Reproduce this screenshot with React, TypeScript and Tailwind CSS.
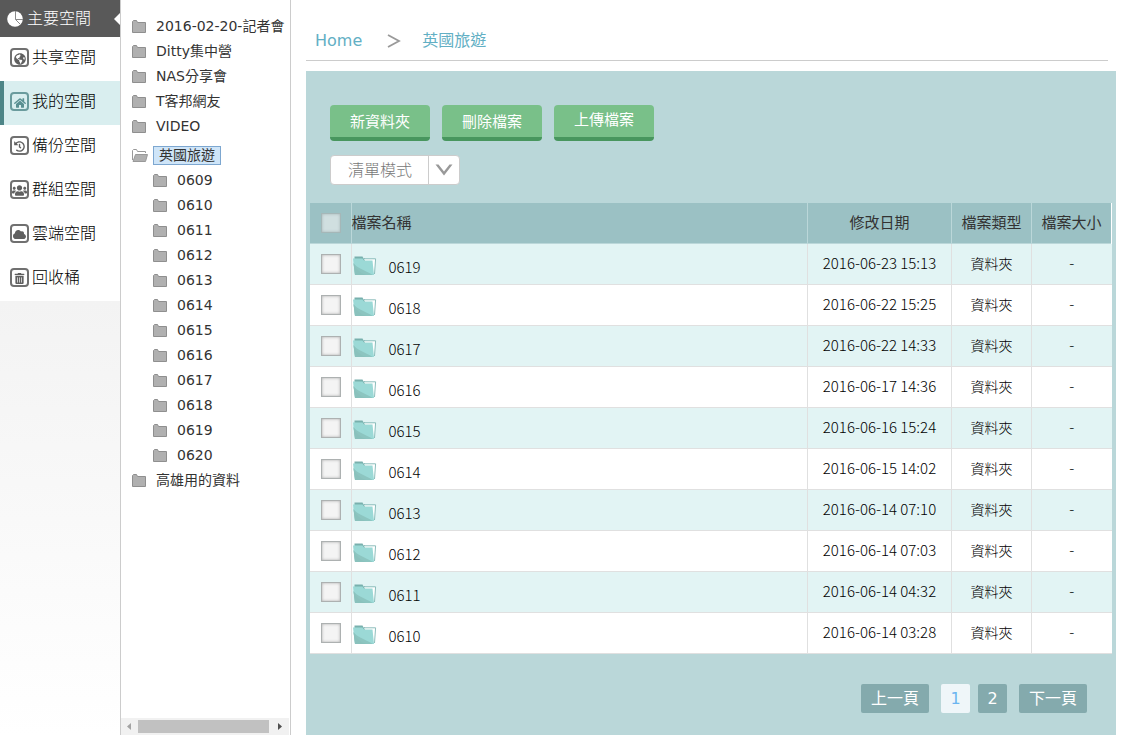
import React from "react";
import { FaHome, FaHistory, FaUsers, FaCloud, FaTrashAlt, FaGlobeAmericas } from "react-icons/fa";
import type { IconType } from "react-icons";

const spaces: { label: string; icon: IconType; size: string; active?: boolean }[] = [
  { label: "共享空間", icon: FaGlobeAmericas, size: "size-3" },
  { label: "我的空間", icon: FaHome, size: "size-3", active: true },
  { label: "備份空間", icon: FaHistory, size: "size-[11px]" },
  { label: "群組空間", icon: FaUsers, size: "size-[15px]" },
  { label: "雲端空間", icon: FaCloud, size: "size-[13px]" },
  { label: "回收桶", icon: FaTrashAlt, size: "size-[11px]" },
];

const topFolders = ["2016-02-20-記者會", "Ditty集中營", "NAS分享會", "T客邦網友", "VIDEO"];
const subFolders = ["0609", "0610", "0611", "0612", "0613", "0614", "0615", "0616", "0617", "0618", "0619", "0620"];

const files = [
  { name: "0619", date: "2016-06-23 15:13" },
  { name: "0618", date: "2016-06-22 15:25" },
  { name: "0617", date: "2016-06-22 14:33" },
  { name: "0616", date: "2016-06-17 14:36" },
  { name: "0615", date: "2016-06-16 15:24" },
  { name: "0614", date: "2016-06-15 14:02" },
  { name: "0613", date: "2016-06-14 07:10" },
  { name: "0612", date: "2016-06-14 07:03" },
  { name: "0611", date: "2016-06-14 04:32" },
  { name: "0610", date: "2016-06-14 03:28" },
];

const checkbox =
  "mx-auto block size-5 appearance-none border border-[#adb1b1] bg-[#f4f4f4] shadow-[inset_0_0_3px_rgba(0,0,0,0.3)] checked:bg-[#7fa9ac]";

function PieIcon() {
  return (
    <svg viewBox="0 0 16 16" className="size-4" aria-hidden="true">
      <circle cx="8" cy="8" r="7.800" fill="#fff" />
      <path d="M8.500 0V8.500H16M8.500 8.500L13.500 13.500" fill="none" stroke="#8a8a8a" />
    </svg>
  );
}

function TreeIcon() {
  return (
    <svg viewBox="0 0 14 13" className="h-[13px] w-[14px] shrink-0" aria-hidden="true">
      <path d="M.5 12.5V1.5L1.5.5H4.5L5.5 2.5H13.5V12.5Z" fill="#b0b0b0" stroke="#8f8f8f" />
    </svg>
  );
}

function OpenTreeIcon() {
  return (
    <svg viewBox="0 0 16 13" className="h-[13px] w-4 shrink-0" aria-hidden="true">
      <path d="M.5 11V1.5L1.5.5H4.5L5.5 2.5H13.5V4" fill="none" stroke="#999" />
      <path d="M3.5 5.5H15.5L13.5 12.5H1Z" fill="#b0b0b0" stroke="#999" />
    </svg>
  );
}

function FolderIcon() {
  return (
    <svg viewBox="0 0 24 20" className="h-5 w-6 shrink-0" aria-hidden="true">
      <path d="M1.500 .5H9.500L10.500 2.500H12V5H1.500Z" fill="#78b0ad" />
      <path d="M11 3H22.500L21.500 17H18Z" fill="#fff" />
      <path d="M11 2.800H22.600L21.500 18" fill="none" stroke="#80b5b3" strokeWidth=".9" />
      <path d="M0 2.500H9.500L11 4.500H19.500L21 19H2Z" fill="#9bd9d6" />
      <path d="M.5 7C4 12 10 13.500 20 19H2Z" fill="#8cc5c0" />
      <path d="M.5 7L2 19H13C7 17 3 13 .5 7Z" fill="#8ac1bc" />
    </svg>
  );
}

function TreeItem({ label, nested }: { label: string; nested?: boolean }) {
  return (
    <li>
      <a
        href="#"
        className={`flex h-[25px] items-center gap-[10px] whitespace-nowrap ${nested ? "pl-8" : "pl-[11px]"}`}
      >
        <TreeIcon />
        <span className="pb-0.5">{label}</span>
      </a>
    </li>
  );
}

export default function App() {
  return (
    <div className="flex h-screen bg-white pb-[6px] font-['Noto_Sans_CJK_TC',sans-serif] font-light text-black">
      <nav className="flex w-[121px] shrink-0 flex-col border-r border-[#ccc]" aria-label="空間">
        <a href="#" className="relative flex h-[37px] items-center gap-1 bg-[#595959] pl-[7px] text-base text-white">
          <PieIcon />
          <span className="pb-[3px]">主要空間</span>
          <svg viewBox="0 0 6 12" className="absolute top-[13px] right-0 h-3 w-[6px]" aria-hidden="true">
            <path d="M6 0V12L0 6Z" fill="#fff" />
          </svg>
        </a>
        {spaces.map(({ label, icon: Icon, size, active }) => (
          <a
            key={label}
            href="#"
            className={`flex h-11 items-center gap-[3px] border-l-4 pb-[3px] pl-[6px] text-base ${
              active ? "border-[#4d8587] bg-[#d9eeef]" : "border-white bg-white"
            }`}
          >
            <span
              className={`flex size-[19px] items-center justify-center rounded-[4px] border-2 pt-0.5 ${
                active ? "border-[#6a9b9d] text-[#5a9092]" : "border-[#707070] text-[#606060]"
              }`}
            >
              <Icon className={`${size} shrink-0`} />
            </span>
            <span className="pb-[3px]">{label}</span>
          </a>
        ))}
        <div className="flex-1 bg-linear-to-b from-[#f3f3f3] to-white" />
      </nav>

      <aside className="flex w-[170px] shrink-0 flex-col border-r border-[#ccc] font-['DejaVu_Sans','Noto_Sans_CJK_TC',sans-serif] text-sm font-normal text-[#333]">
        <ul className="flex-1 overflow-hidden pt-[14px]">
          {topFolders.map((f) => (
            <TreeItem key={f} label={f} />
          ))}
          <li>
            <a href="#" className="flex h-[29px] items-center gap-[5px] pt-1 pl-[11px]">
              <OpenTreeIcon />
              <span className="border border-[#7da7d0] bg-[#cfe5f8] px-[5px] leading-[17px]">英國旅遊</span>
            </a>
            <ul>
              {subFolders.map((f) => (
                <TreeItem key={f} label={f} nested />
              ))}
            </ul>
          </li>
          <TreeItem label="高雄用的資料" />
        </ul>
        <div className="mr-px flex h-[17px] items-center bg-[#f1f1f1]" aria-hidden="true">
          <svg viewBox="0 0 17 17" className="size-[17px] shrink-0">
            <path d="M10 5V12L6 8.5Z" fill="#a3a3a3" />
          </svg>
          <div className="h-[13px] flex-1 bg-[#c1c1c1]" />
          <svg viewBox="0 0 20 17" className="h-[17px] w-5 shrink-0">
            <path d="M9 5V12L13 8.5Z" fill="#505050" />
          </svg>
        </div>
      </aside>

      <main className="ml-[15px] flex min-w-0 flex-1 flex-col">
        <header className="mr-[34px] flex h-[61px] items-center border-b border-[#ccc] pt-[21px] pl-[9px] font-['DejaVu_Sans','Noto_Sans_CJK_TC',sans-serif] text-base font-normal text-[#62afc4]">
          <a href="#">Home</a>
          <svg viewBox="0 0 14 14" className="mr-[21px] ml-[25px] size-[14px]" aria-hidden="true">
            <path d="M1 1L12 7L1 13" fill="none" stroke="#999" strokeWidth="1.8" />
          </svg>
          <a href="#">英國旅遊</a>
        </header>

        <section className="mt-[10px] mr-[26px] flex-1 bg-[#bad7d9] px-1 pt-[34px]">
          <div className="flex gap-3 pl-5 text-[15px] font-normal text-white">
            <button className="h-9 w-[100px] rounded-[4px] border-b-4 border-[#48965e] bg-[#79c089]">新資料夾</button>
            <button className="h-9 w-[100px] rounded-[4px] border-b-4 border-[#48965e] bg-[#79c089]">刪除檔案</button>
            <button className="h-9 w-[100px] rounded-[4px] border-b-4 border-[#48965e] bg-[#79c089] pb-1">上傳檔案</button>
          </div>
          <label className="relative mt-[14px] ml-5 flex h-[30px] w-[130px] rounded-[4px] border border-[#ccc] bg-white text-base text-[#777]">
            <select aria-label="顯示模式" className="w-full appearance-none bg-transparent pb-0.5 pl-[17px]">
              <option>清單模式</option>
            </select>
            <span className="pointer-events-none absolute inset-y-0 right-0 flex w-[31px] items-center justify-center border-l border-[#ccc]">
              <svg viewBox="0 0 18 12" className="h-3 w-[18px]" aria-hidden="true">
                <path d="M.5 .5H3.5L9 7.500L14.500 .5H17.500L9 11.500Z" fill="#999" />
              </svg>
            </span>
          </label>

          <table className="mt-[18px] w-full table-fixed border-collapse text-[15px]">
            <colgroup>
              <col className="w-[41px]" />
              <col />
              <col className="w-36" />
              <col className="w-20" />
              <col className="w-20" />
            </colgroup>
            <thead>
              <tr className="h-10 border-b border-[#bbd7d9] bg-[#9bc1c4] text-[#333]">
                <th className="border-r border-[#bbd7d9] pl-px">
                  <input type="checkbox" aria-label="全選" className={`${checkbox} opacity-60`} />
                </th>
                <th className="border-r border-[#bbd7d9] pb-0.5 text-left font-normal">檔案名稱</th>
                <th className="border-r border-[#bbd7d9] pb-0.5 font-normal">修改日期</th>
                <th className="border-r border-[#bbd7d9] pb-0.5 font-normal">檔案類型</th>
                <th className="border-r border-white pb-0.5 font-normal">檔案大小</th>
              </tr>
            </thead>
            <tbody>
              {files.map((f) => (
                <tr key={f.name} className="h-[41px] border-b border-[#e0e0e0] bg-white text-center odd:bg-[#e2f4f4]">
                  <td className="border-r border-[#e0e0e0] pl-px">
                    <input type="checkbox" aria-label={f.name} className={checkbox} />
                  </td>
                  <td className="border-r border-[#e0e0e0]">
                    <a href="#" className="flex items-center gap-3 pt-1 pl-px">
                      <FolderIcon />
                      <span className="pt-0.5 leading-5">{f.name}</span>
                    </a>
                  </td>
                  <td className="border-r border-[#e0e0e0]">{f.date}</td>
                  <td className="border-r border-[#e0e0e0] pb-px text-sm">資料夾</td>
                  <td>-</td>
                </tr>
              ))}
            </tbody>
          </table>

          <nav
            className="mt-[30px] flex justify-end pr-[25px] font-['DejaVu_Sans','Noto_Sans_CJK_TC',sans-serif] text-base leading-[29px] font-normal text-white"
            aria-label="分頁"
          >
            <a href="#" className="rounded-[2px] bg-[#84aaad] px-[10px]">上一頁</a>
            <a href="#" className="ml-3 w-[29px] rounded-[2px] bg-[#eff6f9] text-center text-[#6bb5f0]">1</a>
            <a href="#" className="ml-2 w-[29px] rounded-[2px] bg-[#84aaad] text-center">2</a>
            <a href="#" className="ml-3 rounded-[2px] bg-[#84aaad] px-[10px]">下一頁</a>
          </nav>
        </section>
      </main>
    </div>
  );
}
